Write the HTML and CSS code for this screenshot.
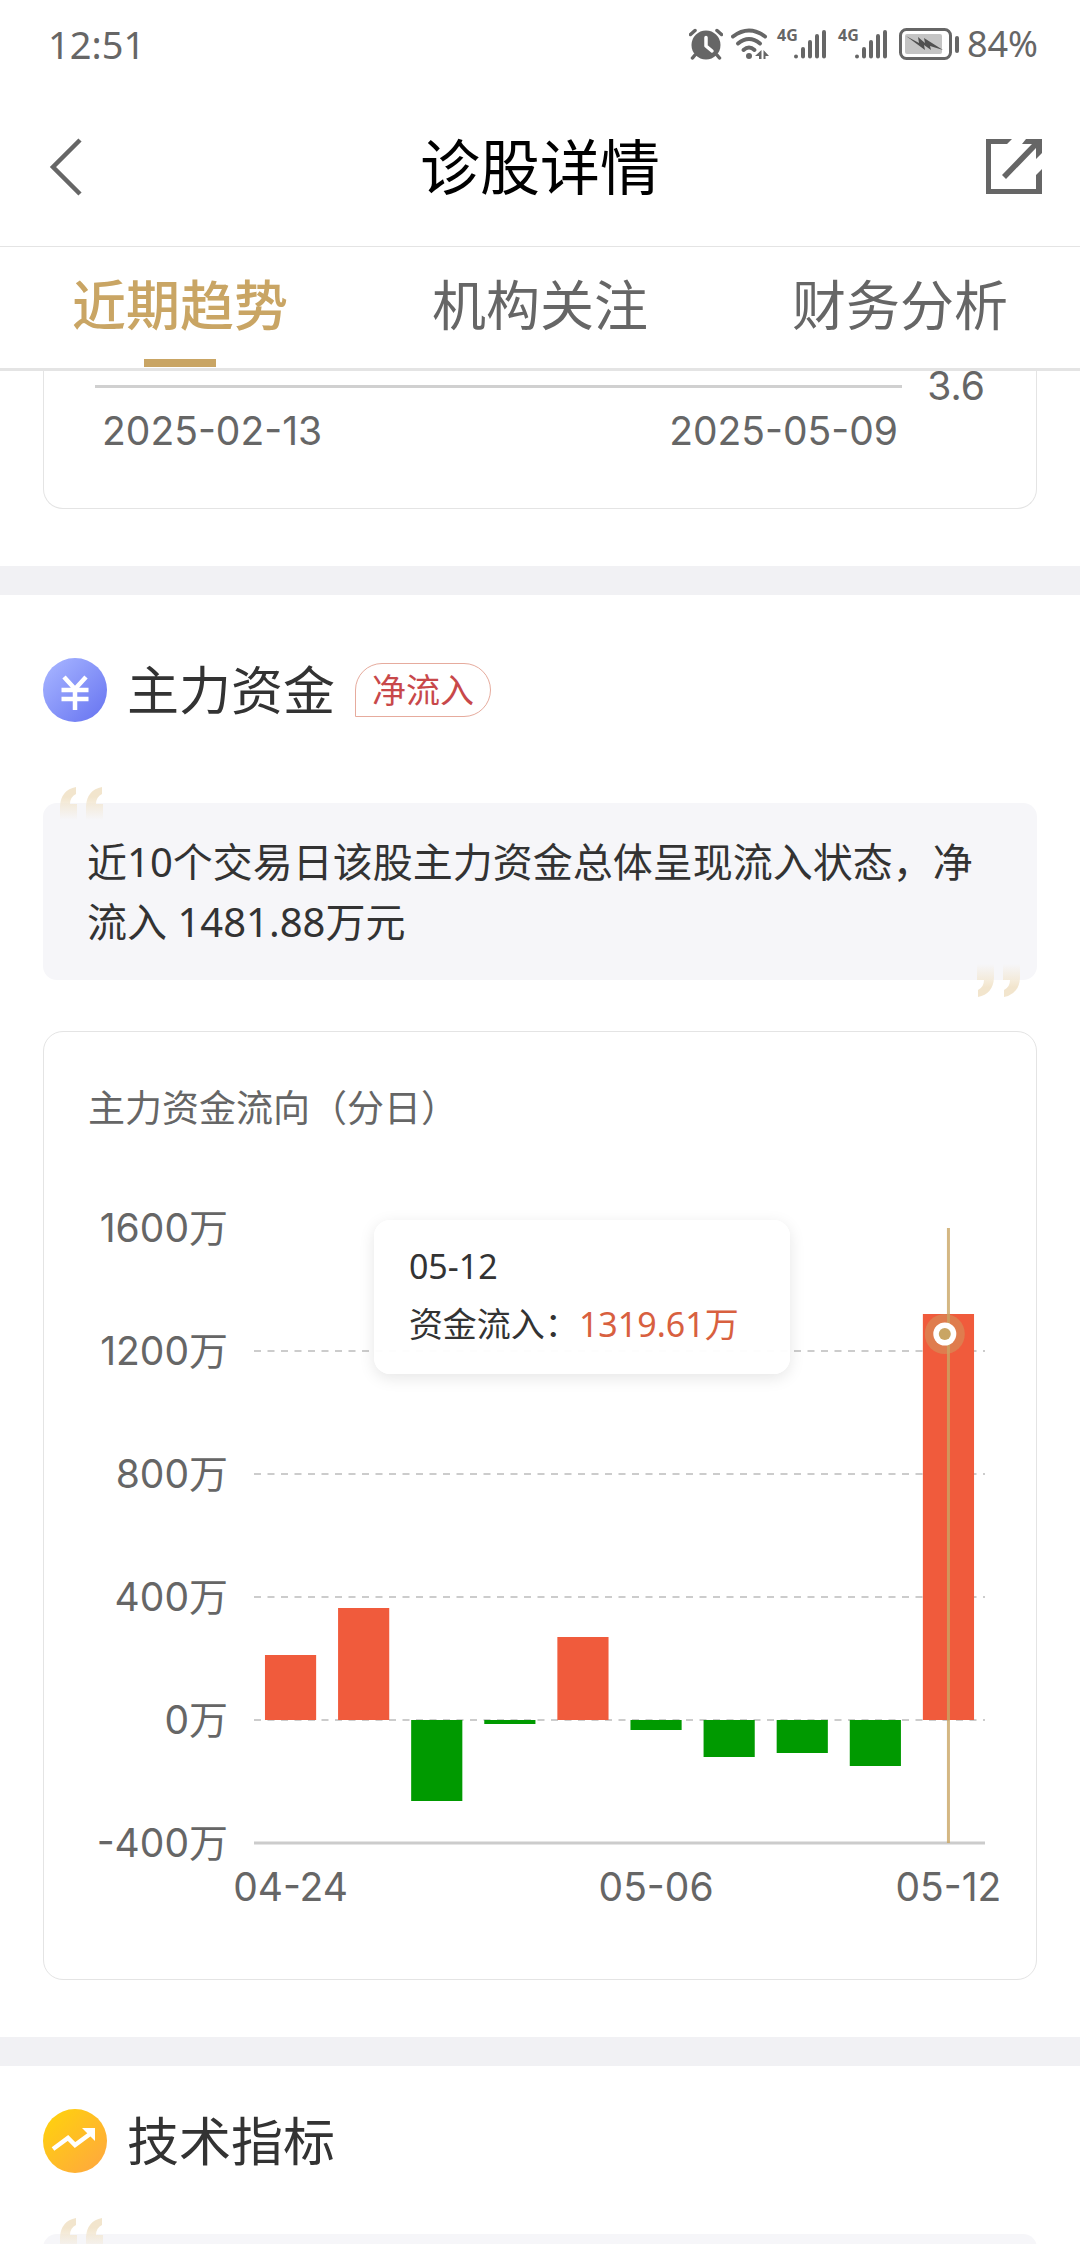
FILE: index.html
```html
<!DOCTYPE html>
<html lang="zh-CN">
<head>
<meta charset="utf-8">
<meta name="viewport" content="width=device-width, initial-scale=1">
<title>诊股详情</title>
<link rel="stylesheet" href="styles.css">
</head>
<body>
<div class="app">
  <div class="status">
    <span class="status-time">12:51</span>
    <div class="status-icons">
      <svg class="icon-alarm" width="34" height="32" viewBox="0 0 34 32" aria-hidden="true">
        <circle cx="17" cy="17" r="14.5" fill="#666"/>
        <path d="M1.5 6.5 6 2.500M32.500 6.500 28 2.500M6 27 3.500 30M28 27l2.500 3" stroke="#666" stroke-width="3.500" stroke-linecap="round"/>
        <path d="M17 9.500v8.500l6 5" fill="none" stroke="#fff" stroke-width="3.500" stroke-linecap="round" stroke-linejoin="round"/>
      </svg>
      <svg class="icon-wifi" width="38" height="32" viewBox="0 0 38 32" aria-hidden="true">
        <g fill="none" stroke="#666" stroke-width="4" stroke-linecap="round">
          <path d="M2 8.500Q18 -3.500 34 8.500"/>
          <path d="M7 15.500Q18 6.500 29 15.500"/>
          <path d="M12.500 22Q18 17 23.500 22"/>
        </g>
        <circle cx="18" cy="28" r="3" fill="#666"/>
        <path d="M30.500 22v9h-2.500v-3h-4zM32.500 31v-9l5.500 6h-3.500v3z" fill="#666"/>
      </svg>
      <svg class="icon-signal" width="50" height="32" viewBox="0 0 50 32" aria-label="4G">
        <text x="0" y="13" class="signal-type">4G</text>
        <g stroke="#666" stroke-width="4" stroke-linecap="round">
          <path d="M19 28.500v.1M26 21v7.500M33 14v14.500M40 8v20.500M47 4v24.500"/>
        </g>
      </svg>
      <svg class="icon-signal" width="50" height="32" viewBox="0 0 50 32" aria-label="4G">
        <text x="0" y="13" class="signal-type">4G</text>
        <g stroke="#666" stroke-width="4" stroke-linecap="round">
          <path d="M19 28.500v.1M26 21v7.500M33 14v14.500M40 8v20.500M47 4v24.500"/>
        </g>
      </svg>
      <svg class="icon-battery" width="61" height="32" viewBox="0 0 61 32" aria-hidden="true">
        <rect x="1.500" y="1.500" width="50" height="29" rx="6" fill="none" stroke="#666" stroke-width="3"/>
        <rect x="6" y="6" width="37" height="20" rx="2" fill="#c4c4c4"/>
        <path d="M7 8l13 7-1-6 7 6-1-5 19 12-13-4 1 4-7-5 1 5z" fill="#505050"/>
        <rect x="56" y="8" width="4" height="17" rx="2" fill="#666"/>
      </svg>
      <span class="status-level">84%</span>
    </div>
  </div>

  <header class="titlebar">
    <button class="icon-button" type="button" aria-label="返回">
      <svg width="58" height="60" viewBox="0 0 58 60"><path d="M43 3 16 30 43 57" fill="none" stroke="#666" stroke-width="4.500"/></svg>
    </button>
    <h1 class="page-title">诊股详情</h1>
    <button class="icon-button icon-button-end" type="button" aria-label="分享">
      <svg width="58" height="56" viewBox="0 0 58 56">
        <g fill="#666">
          <path d="M1 0H27L22 5H6V50H51V36L57 30V55H1z"/>
          <path d="M41 0H57V14L51 20V9L21 40 17 36 47 5H37z"/>
        </g>
      </svg>
    </button>
  </header>

  <nav class="tabs">
    <a class="tab tab-active" href="#trend" aria-current="page">近期趋势</a>
    <a class="tab" href="#institution">机构关注</a>
    <a class="tab" href="#finance">财务分析</a>
  </nav>

  <main class="content" id="trend">
    <section class="section">
      <div class="card card-price">
        <div class="price-axis">
          <span class="price-line"></span>
          <span class="price-min">3.6</span>
        </div>
        <div class="price-dates">
          <time>2025-02-13</time>
          <time>2025-05-09</time>
        </div>
      </div>
    </section>

    <section class="section section-divided">
      <div class="section-head section-head-roomy">
        <svg class="section-icon" viewBox="0 0 64 64" aria-hidden="true">
          <defs><linearGradient id="blue" x1="0" y1="0" x2="1" y2="1"><stop offset=".1" stop-color="#a3b1ff"/><stop offset=".9" stop-color="#6c79f2"/></linearGradient></defs>
          <circle cx="32" cy="32" r="32" fill="url(#blue)"/>
          <path d="M21 19 32 31 43 19M32 30V52M18.500 32h27M18.500 41h27" fill="none" stroke="#fff" stroke-width="4.500"/>
        </svg>
        <h2 class="section-title">主力资金</h2>
        <span class="badge">净流入</span>
      </div>

      <div class="summary">
        <svg class="quote quote-open" viewBox="0 0 44 33" aria-hidden="true">
          <defs><linearGradient id="fade" x1="0" y1="0" x2="0" y2="1"><stop offset=".3" stop-color="#f2e5cd"/><stop offset="1" stop-color="#f2e5cd" stop-opacity="0"/></linearGradient></defs>
          <path d="M0 33V19Q1 3 16 0V7Q10 10 10 17H17V33zM26 33V19Q27 3 42 0V7Q36 10 36 17H43V33z" fill="url(#fade)"/>
        </svg>
        <p class="summary-text">近10个交易日该股主力资金总体呈现流入状态，净流入 1481.88万元</p>
        <svg class="quote quote-close" viewBox="0 0 44 33" aria-hidden="true">
          <path d="M0 33V19Q1 3 16 0V7Q10 10 10 17H17V33zM26 33V19Q27 3 42 0V7Q36 10 36 17H43V33z" fill="url(#fade)"/>
        </svg>
      </div>

      <div class="card card-flow">
        <h3 class="card-title">主力资金流向（分日）</h3>
        <div class="chart">
          <div class="y-axis">
            <span>1600万</span>
            <span>1200万</span>
            <span>800万</span>
            <span>400万</span>
            <span>0万</span>
            <span>-400万</span>
          </div>
          <div class="plot">
            <svg class="plot-canvas" role="img" aria-label="主力资金流向柱状图">
              <g class="grid-line">
                <line x1="0" x2="100%" y1="123" y2="123"/>
                <line x1="0" x2="100%" y1="246" y2="246"/>
                <line x1="0" x2="100%" y1="369" y2="369"/>
                <line x1="0" x2="100%" y1="492" y2="492"/>
              </g>
              <line class="base-line" x1="0" x2="100%" y1="615" y2="615"/>
              <g class="bar-in">
                <rect x="1.5%" y="427" width="7%" height="65"/>
                <rect x="11.5%" y="380" width="7%" height="112"/>
                <rect x="41.5%" y="409" width="7%" height="83"/>
                <rect x="91.5%" y="86" width="7%" height="406"/>
              </g>
              <g class="bar-out">
                <rect x="21.5%" y="492" width="7%" height="81"/>
                <rect x="31.5%" y="492" width="7%" height="4"/>
                <rect x="51.5%" y="492" width="7%" height="10"/>
                <rect x="61.5%" y="492" width="7%" height="37"/>
                <rect x="71.5%" y="492" width="7%" height="33"/>
                <rect x="81.5%" y="492" width="7%" height="46"/>
              </g>
              <line class="cursor-line" x1="95%" x2="95%" y1="0" y2="615"/>
              <circle cx="94.5%" cy="106" r="20" fill="#c9a564" fill-opacity=".45"/>
              <circle cx="94.5%" cy="106" r="11.500" fill="#fff"/>
              <circle cx="94.5%" cy="106" r="6" fill="#c9a564"/>
            </svg>
            <div class="tooltip">
              <div>05-12</div>
              <div>资金流入：<span class="tooltip-value">1319.61万</span></div>
            </div>
          </div>
          <div class="x-axis">
            <time class="x-first">04-24</time>
            <time class="x-middle">05-06</time>
            <time class="x-last">05-12</time>
          </div>
        </div>
      </div>
    </section>

    <section class="section section-divided">
      <div class="section-head">
        <svg class="section-icon" viewBox="0 0 64 64" aria-hidden="true">
          <defs><linearGradient id="gold" x1="0" y1="0" x2="1" y2="1"><stop offset=".1" stop-color="#ffd00f"/><stop offset=".9" stop-color="#ffaa3c"/></linearGradient></defs>
          <circle cx="32" cy="32" r="32" fill="url(#gold)"/>
          <path d="M10 40 25 29 32 36 47 25" fill="none" stroke="#fff" stroke-width="4.500"/>
          <path d="M39 19H52V32z" fill="#fff"/>
        </svg>
        <h2 class="section-title">技术指标</h2>
      </div>
      <div class="summary">
        <svg class="quote quote-open" viewBox="0 0 44 33" aria-hidden="true">
          <path d="M0 33V19Q1 3 16 0V7Q10 10 10 17H17V33zM26 33V19Q27 3 42 0V7Q36 10 36 17H43V33z" fill="url(#fade)"/>
        </svg>
      </div>
    </section>
  </main>
</div>
</body>
</html>
```
FILE: styles.css
```css
* {
  box-sizing: border-box;
}

body {
  margin: 0;
  background: #fff;
  color: #333;
  font-family: "Noto Sans", "Noto Sans CJK SC", sans-serif;
}

h1,
h2,
h3,
p {
  margin: 0;
  font-weight: 400;
}

svg {
  display: block;
  flex: none;
}

.app {
  display: flex;
  flex-direction: column;
  height: 100vh;
}

/* Status bar */

.status {
  display: flex;
  flex: none;
  align-items: center;
  justify-content: space-between;
  padding: 0 42px 0 48px;
  color: #666;
  font-size: 38px;
  line-height: 88px;
}

.status-icons {
  display: flex;
  align-items: center;
}

.icon-alarm,
.icon-wifi {
  margin-right: 8px;
}

.icon-signal {
  margin-right: 11px;
  overflow: visible;
}

.icon-battery {
  margin-right: 7px;
}

.signal-type {
  fill: #666;
  font-family: "Liberation Sans Narrow", "Noto Sans", sans-serif;
  font-size: 16px;
  font-weight: 700;
}

.status-level {
  font-size: 36px;
}

/* Title bar */

.titlebar {
  display: grid;
  flex: none;
  grid-template-columns: 1fr auto 1fr;
  align-items: center;
  padding: 33px 37px;
  border-bottom: 1px solid #e4e4e4;
}

.icon-button {
  display: flex;
  justify-self: start;
  padding: 0;
  border: 0;
  background: none;
}

.icon-button-end {
  justify-self: end;
}

.page-title {
  color: #000;
  font-size: 60px;
  line-height: 92px;
}

/* Tabs */

.tabs {
  display: grid;
  flex: none;
  grid-template-columns: repeat(3, 1fr);
  border-bottom: 3px solid #e4e4e4;
}

.tab {
  display: flex;
  flex-direction: column;
  align-items: center;
  gap: 18px;
  padding: 22px 0 1px;
  color: #666;
  font-size: 54px;
  line-height: 72px;
  text-decoration: none;
}

.tab::after {
  content: "";
  width: 72px;
  height: 8px;
}

.tab-active {
  color: #c9a564;
  font-weight: 500;
}

.tab-active::after {
  background: #c9a564;
}

/* Scrolling content */

.content {
  flex: 1;
  min-height: 0;
  overflow-y: auto;
  scrollbar-width: none;
}

.section {
  padding: 0 43px 57px;
}

.section-divided {
  border-top: 29px solid #f1f1f4;
}

.section-head {
  display: flex;
  align-items: center;
  gap: 20px;
  padding: 38px 0 56px;
}

.section-head-roomy {
  padding: 58px 0 76px;
}

.section-icon {
  width: 64px;
  height: 64px;
}

.section-title {
  font-size: 52px;
  line-height: 74px;
}

.badge {
  padding: 0 16px;
  border: 1px solid #e6ab9d;
  border-radius: 27px 27px 27px 0;
  color: #c8484a;
  font-size: 34px;
  line-height: 52px;
}

.card {
  border: 1px solid #e4e4e4;
  border-radius: 20px;
}

/* Axis labels */

.card-price,
.y-axis,
.x-axis {
  font-family: Inter, "Noto Sans CJK SC", sans-serif;
  font-size: 39px;
}

/* Price chart foot */

.card-price {
  padding: 0 51px 47px;
  border-top: 0;
  border-radius: 0 0 20px 20px;
  color: #666;
}

.price-axis {
  display: flex;
  align-items: center;
  gap: 25px;
  line-height: 30px;
}

.price-line {
  flex: 1;
  height: 3px;
  background: #d0d0d0;
}

.price-dates {
  display: flex;
  justify-content: space-between;
  margin-right: 80px;
  padding: 0 7px;
  line-height: 60px;
}

/* Quoted summary */

.summary {
  position: relative;
  min-height: 177px;
  margin-bottom: 51px;
  padding: 29px 44px 28px;
  border-radius: 14px;
  background: #f6f6f9;
}

.summary-text {
  font-size: 40px;
  line-height: 60px;
}

.quote {
  position: absolute;
  width: 44px;
  height: 33px;
}

.quote-open {
  top: -16px;
  left: 17px;
}

.quote-close {
  right: 17px;
  bottom: -17px;
  transform: rotate(180deg);
}

/* Capital flow chart */

.card-flow {
  padding: 46px 51px 68px 44px;
  color: #666;
}

.card-title {
  margin-bottom: 70px;
  font-size: 37px;
  line-height: 60px;
}

.chart {
  display: grid;
  grid-template-columns: 140px minmax(0, 1fr);
  column-gap: 26px;
}

.y-axis {
  display: flex;
  flex-direction: column;
  justify-content: space-between;
  line-height: 40px;
  text-align: right;
}

.plot {
  position: relative;
  padding: 20px 0;
}

.plot-canvas {
  width: 100%;
  height: 615px;
  overflow: visible;
}

.grid-line {
  stroke: #ccc;
  stroke-width: 2;
  stroke-dasharray: 7 6.5;
}

.base-line {
  stroke: #ccc;
  stroke-width: 3;
}

.bar-in {
  fill: #f05b3c;
}

.bar-out {
  fill: #009a00;
}

.cursor-line {
  stroke: #c9a564;
  stroke-opacity: 0.8;
  stroke-width: 3;
}

.tooltip {
  position: absolute;
  top: 12px;
  left: 16.4%;
  padding: 17px 51px 21px 35px;
  border-radius: 16px;
  background: rgba(255, 255, 255, 0.96);
  box-shadow: 0 4px 16px rgba(0, 0, 0, 0.1);
  color: #333;
  font-size: 34px;
  line-height: 58px;
  white-space: nowrap;
}

.tooltip-value {
  color: #d8603f;
}

.x-axis {
  display: grid;
  grid-column: 2;
  grid-template-columns: repeat(10, minmax(0, 1fr));
  justify-items: center;
  line-height: 48px;
  white-space: nowrap;
}

.x-first {
  grid-column: 1;
}

.x-middle {
  grid-column: 6;
}

.x-last {
  grid-column: 10;
}
```
